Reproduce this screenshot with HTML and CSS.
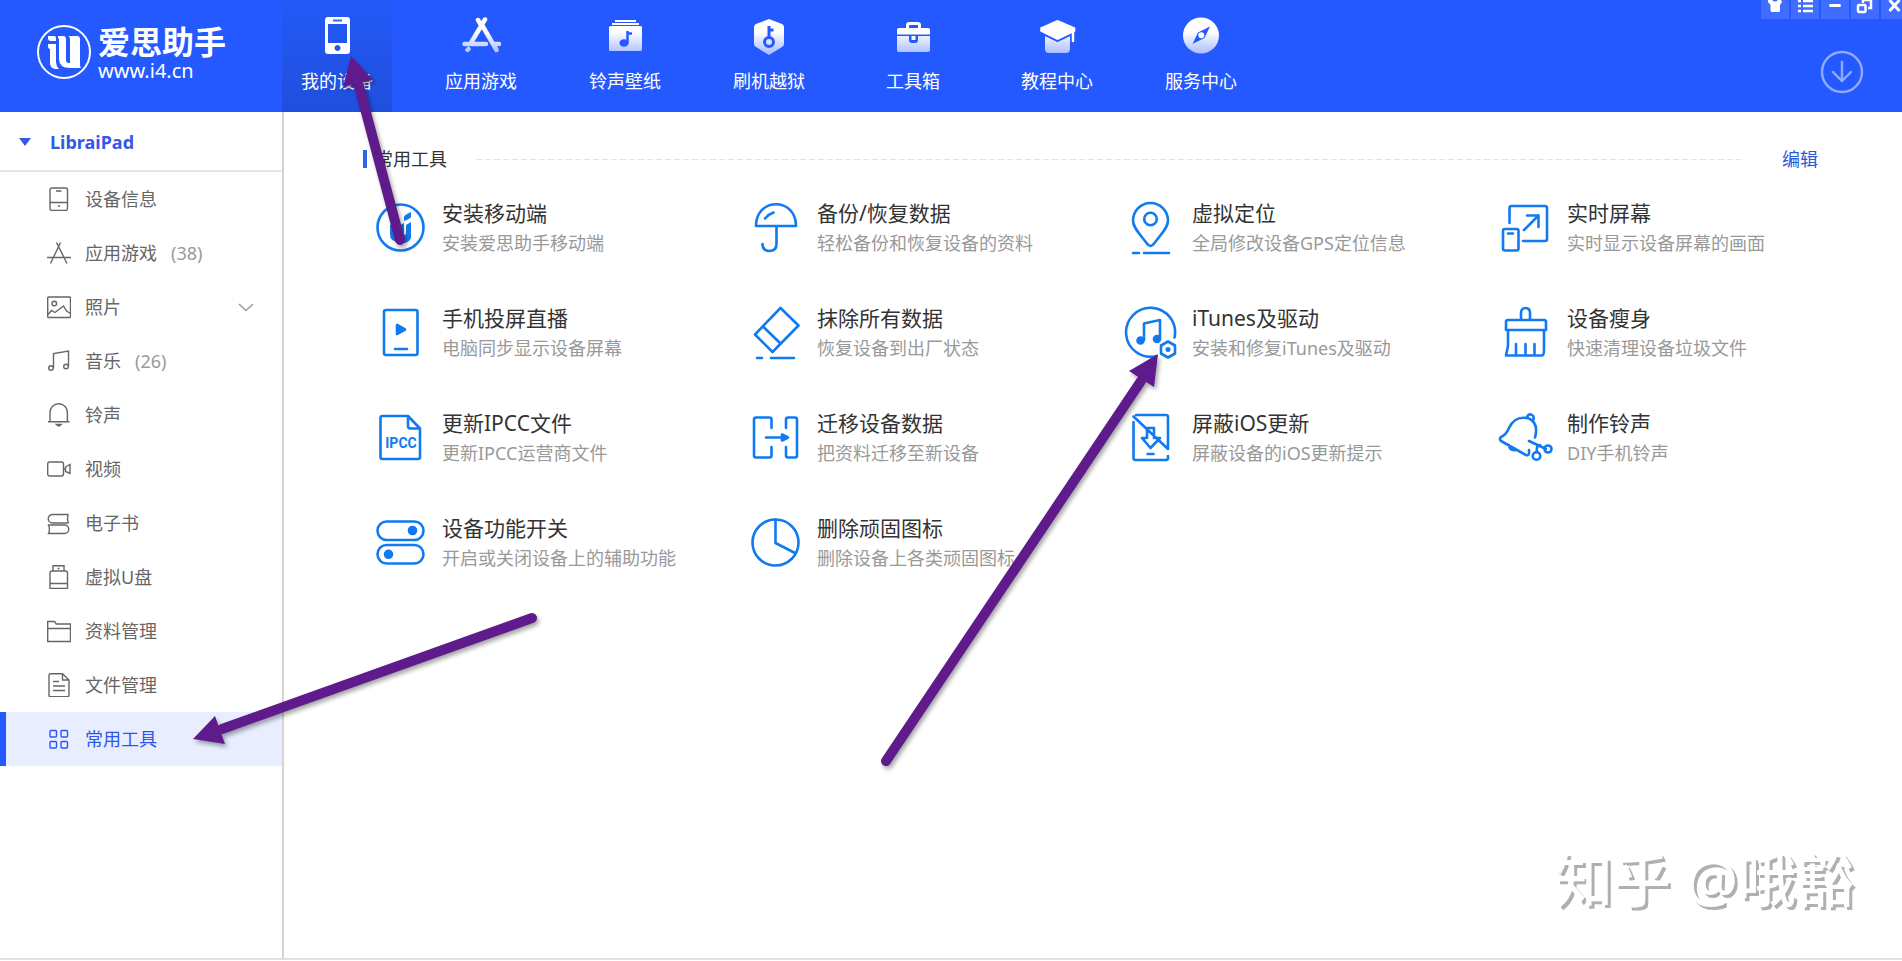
FILE: index.html
```html
<!DOCTYPE html>
<html lang="zh-CN">
<head>
<meta charset="utf-8">
<meta name="viewport" content="width=device-width, initial-scale=1">
<title>爱思助手</title>
<link rel="stylesheet" href="styles.css">
</head>
<body>
<svg class="defs" aria-hidden="true">
  <defs>
    <linearGradient id="fade" gradientUnits="userSpaceOnUse" x1="0" y1="6" x2="0" y2="38">
      <stop offset="0.3" stop-color="#fff"/>
      <stop offset="1" stop-color="#a9bcff"/>
    </linearGradient>
  </defs>
</svg>

<header class="topbar">
  <a class="brand" href="#">
    <svg class="brand-mark" viewBox="0 0 56 56" aria-hidden="true">
      <circle cx="28" cy="28" r="26" fill="none" stroke="#fff" stroke-width="2"/>
      <g fill="#fff">
        <path d="M12 12h6q2 0 2 2v3h-5q-3 0-3-3z"/>
        <path d="M12 20h8v18q0 4 3 7h-4q-5-1-5-6V25q-2 0-2-3z"/>
        <path d="M22 12h5q3 0 3 3v21q0 3 3 3h1V16q0-4-2-4h9q3 0 3 3v26q0 2 1 3H34q-11 0-11-9V16q0-2-1-2z"/>
      </g>
    </svg>
    <span class="brand-text">
      <strong class="brand-name">爱思助手</strong>
      <span class="brand-url">www.i4.cn</span>
    </span>
  </a>
  <nav class="topnav">
    <a class="topnav-item is-active" href="#">
      <svg class="topnav-icon" viewBox="0 0 40 40"><path fill="#fff" fill-rule="evenodd" d="M11 1h19a3 3 0 0 1 3 3v31a3 3 0 0 1-3 3H11a3 3 0 0 1-3-3V4a3 3 0 0 1 3-3zM11 8v19h19V8zM20.500 29a3 3 0 1 0 .01 0z"/><path stroke="#3f66e8" stroke-width="2" d="M16 4.500h9"/></svg>
      <span>我的设备</span>
    </a>
    <a class="topnav-item" href="#">
      <svg class="topnav-icon" viewBox="0 0 40 40"><g fill="none" stroke="url(#fade)" stroke-width="4.500" stroke-linecap="round"><path d="M17 4l3 5M24 3.500L10.500 26M21 9l14.500 25M3.500 28H25M33 28h5M7.500 33l-1 1"/></g></svg>
      <span>应用游戏</span>
    </a>
    <a class="topnav-item" href="#">
      <svg class="topnav-icon" viewBox="0 0 40 40"><path stroke="#fff" stroke-width="2" d="M10 5h21M7 8h27"/><rect x="4" y="10" width="33" height="25" rx="1.500" fill="url(#fade)"/><ellipse cx="19" cy="27" rx="4.500" ry="3.800" fill="#2459ff"/><path fill="none" stroke="#2459ff" stroke-width="2.500" d="M22.500 27V15M22 17.500h5"/></svg>
      <span>铃声壁纸</span>
    </a>
    <a class="topnav-item" href="#">
      <svg class="topnav-icon" viewBox="0 0 40 40"><path fill="url(#fade)" d="M20 3l13 5q2 1 2 3v17q0 2-2 3l-13 8-13-8q-2-1-2-3V11q0-2 2-3z"/><g fill="none" stroke="#2459ff" stroke-width="3"><circle cx="20" cy="26" r="4.500"/><path d="M20 21.500V10M20 14h4.500"/></g></svg>
      <span>刷机越狱</span>
    </a>
    <a class="topnav-item" href="#">
      <svg class="topnav-icon" viewBox="0 0 40 40"><path fill="none" stroke="#fff" stroke-width="3" d="M14.500 13V9q0-1.500 2-1.500h8q2 0 2 1.500v4"/><path fill="#fff" d="M6 12h29q2 0 2 2v4.500H4V14q0-2 2-2z"/><path fill="url(#fade)" d="M4 20h12v4q0 3 3 3h3q3 0 3-3v-4h12v14q0 2-2 2H6q-2 0-2-2z"/><path fill="#fff" d="M18.500 20h4v4h-4z"/></svg>
      <span>工具箱</span>
    </a>
    <a class="topnav-item" href="#">
      <svg class="topnav-icon" viewBox="0 0 40 40"><path fill="url(#fade)" d="M8 20l12.500 6L33 20v13q0 4-4 4H12q-4 0-4-4z"/><path fill="#fff" stroke="#2459ff" stroke-width="1.500" stroke-linejoin="round" d="M20.500 3L39 11v5L20.500 25 2.500 16v-5z"/><path stroke="#fff" stroke-width="2.500" stroke-linecap="round" d="M36 13v12"/></svg>
      <span>教程中心</span>
    </a>
    <a class="topnav-item" href="#">
      <svg class="topnav-icon" viewBox="0 0 40 40"><circle cx="20" cy="19.500" r="18" fill="url(#fade)"/><path fill="#2459ff" d="M29 10.500l-5.500 11.500L11.500 28 17 16.500z"/><circle cx="20.300" cy="19.300" r="3" fill="#fff"/></svg>
      <span>服务中心</span>
    </a>
  </nav>
  <div class="topbar-side">
    <div class="window-controls">
      <button type="button" aria-label="皮肤"><svg viewBox="0 0 28 19"><path fill="#fff" d="M7 0h4q3 3 6 0h3l1 2-2 3v5.500q0 1.500-1.500 1.500h-6.500q-1.500 0-1.500-1.500V5L7 2z"/></svg></button>
      <button type="button" aria-label="菜单"><svg viewBox="0 0 28 19"><path stroke="#fff" stroke-width="2.500" d="M7 1h3M12 1h10M7 6h3M12 6h10M7 11h3M12 11h10"/></svg></button>
      <button type="button" aria-label="最小化"><svg viewBox="0 0 28 19"><path stroke="#fff" stroke-width="3" stroke-linecap="round" d="M9.500 5.500h9"/></svg></button>
      <button type="button" aria-label="还原"><svg viewBox="0 0 28 19"><g fill="none" stroke="#fff" stroke-width="2.500"><rect x="7" y="5" width="7.500" height="7" rx="1"/><path d="M12 3V0h8v8h-3"/></g></svg></button>
      <button type="button" aria-label="关闭"><svg viewBox="0 0 28 19"><path stroke="#fff" stroke-width="3" d="M8.500 0l10 11M18.500 0l-10 11"/></svg></button>
    </div>
    <button class="download" type="button" aria-label="下载">
      <svg viewBox="0 0 44 44"><g fill="none" stroke="#8fabff" stroke-width="2.400" stroke-linecap="round"><circle cx="22" cy="22" r="20"/><path d="M22 12v18M13 22l9 9 9-9"/></g></svg>
    </button>
  </div>
</header>

<div class="body">
  <aside class="sidebar">
    <button class="device" type="button"><span class="device-caret"></span>LibraiPad</button>
    <ul class="menu">
      <li><a class="menu-item" href="#"><svg viewBox="0 0 24 24"><rect x="3" y="1" width="17.500" height="22.500" rx="2"/><path d="M3 15.500h17.500M9 4h5.500M11 19h2"/></svg>设备信息</a></li>
      <li><a class="menu-item" href="#"><svg viewBox="0 0 24 24"><path d="M9.500 1.500l10.500 21M13.500 1.500L3.500 22.500M0 16.500h24"/></svg>应用游戏<span class="count">(38)</span></a></li>
      <li><a class="menu-item" href="#"><svg viewBox="0 0 24 24"><rect x=".7" y="2" width="22.800" height="20.500" rx="1"/><circle cx="7.300" cy="8.500" r="2.300"/><path d="M1 19.500l3.500-4 3.500 2 8.500-6.500 3 5 4 2.500"/></svg>照片<svg class="chevron" viewBox="0 0 16 16"><path d="M1 5l7 6.500L15 5"/></svg></a></li>
      <li><a class="menu-item" href="#"><svg viewBox="0 0 24 24"><path d="M6.500 19V4.500L21.500 2v15"/><circle cx="4" cy="19" r="2.300"/><circle cx="19" cy="17.500" r="2.300"/></svg>音乐<span class="count">(26)</span></a></li>
      <li><a class="menu-item" href="#"><svg viewBox="0 0 24 24"><path d="M3 18.500V9.500a8.700 8.700 0 0 1 17.400 0v9M1 18.700h21.500"/><path d="M9.500 21.500h4.500l-1.500 1.300h-1.500z"/></svg>铃声</a></li>
      <li><a class="menu-item" href="#"><svg viewBox="0 0 24 24"><rect x=".7" y="5" width="15.800" height="14" rx="2"/><path d="M16.500 12h2M18.500 10l4.500-2.500v9L18.500 14.500z"/></svg>视频</a></li>
      <li><a class="menu-item" href="#"><svg viewBox="0 0 24 24"><path d="M21.500 3.500H5.500a4.200 4.200 0 0 0 0 8.500h16M21.500 3.500q-2 4 0 8.500M1.500 14h16a4.200 4.200 0 0 1 0 8.500h-16q2-4 0-8.500z"/></svg>电子书</a></li>
      <li><a class="menu-item" href="#"><svg viewBox="0 0 24 24"><path d="M6 6V.7h11V6M3 8q0-2 2-2h13.500q2 0 2 2v15.500H3zM3 18.500h17.500M10.500 3.500h2"/></svg>虚拟U盘</a></li>
      <li><a class="menu-item" href="#"><svg viewBox="0 0 24 24"><path d="M.7 22.500V2.500h7l1.500 2.500h14.300v17.500zM.7 9.500h22.800"/></svg>资料管理</a></li>
      <li><a class="menu-item" href="#"><svg viewBox="0 0 24 24"><path d="M15.500.7H3.500q-1.500 0-1.500 1.500v20q0 1.500 1.500 1.500h17q1.500 0 1.500-1.500V7zM15.500.7V7H22M6 8.500h6M6 13h12M6 17.500h12"/></svg>文件管理</a></li>
      <li><a class="menu-item is-active" href="#"><svg viewBox="0 0 24 24"><rect x="3" y="3.500" width="6.500" height="6.500" rx="1"/><rect x="14" y="3.500" width="6.500" height="6.500" rx="1"/><rect x="3" y="14.500" width="6.500" height="6.500" rx="1"/><rect x="14" y="14.500" width="6.500" height="6.500" rx="1"/></svg>常用工具</a></li>
    </ul>
  </aside>

  <main class="content">
    <div class="section-head">
      <h1>常用工具</h1>
      <span class="rule"></span>
      <a class="edit" href="#">编辑</a>
    </div>
    <div class="tools">
      <button class="tool" type="button">
        <svg viewBox="0 0 56 56"><circle cx="28.500" cy="27.500" r="23"/><g fill="#117af0" stroke="none"><path d="M18 18l6-4v5l-6 4zM18 25l6-3v13l5 3-3 4q-8-1-8-7zM32 17q0-2 7-5v5q-1 2-7 4zM27 26l5-3v12l2-1V25l5-3v16q-2 5-8 5z"/></g></svg>
        <span class="tool-text"><span class="tool-name">安装移动端</span><span class="tool-desc">安装爱思助手移动端</span></span>
      </button>
      <button class="tool" type="button">
        <svg viewBox="0 0 56 56"><path d="M9 26C9 -3 49 -3 49 26zM29.500 26v18q0 7-7 7t-7-7M18 18.500q3-4 8.500-6"/></svg>
        <span class="tool-text"><span class="tool-name">备份/恢复数据</span><span class="tool-desc">轻松备份和恢复设备的资料</span></span>
      </button>
      <button class="tool" type="button">
        <svg viewBox="0 0 56 56"><path d="M28.500 46q-2 0-4-3C18 34 11 28 11 20.500a17.500 17.500 0 0 1 35 0C46 28 39 34 32.500 43q-2 3-4 3zM11 53h6M22 53h25"/><circle cx="28.500" cy="19" r="6.300"/></svg>
        <span class="tool-text"><span class="tool-name">虚拟定位</span><span class="tool-desc">全局修改设备GPS定位信息</span></span>
      </button>
      <button class="tool" type="button">
        <svg viewBox="0 0 56 56"><path d="M12.500 23V8q0-2 2-2H48q2 0 2 2v31q0 2-2 2H26M27 30l14.500-14.500M30 15.500h11.500V27M11 33.500h5"/><rect x="6" y="29" width="15.500" height="21.500" rx="2"/></svg>
        <span class="tool-text"><span class="tool-name">实时屏幕</span><span class="tool-desc">实时显示设备屏幕的画面</span></span>
      </button>
      <button class="tool" type="button">
        <svg viewBox="0 0 56 56"><rect x="12" y="5" width="33.500" height="45" rx="2"/><path class="solid" d="M25 20l8 4.500-8 4.500z"/><path d="M23 44h12"/></svg>
        <span class="tool-text"><span class="tool-name">手机投屏直播</span><span class="tool-desc">电脑同步显示设备屏幕</span></span>
      </button>
      <button class="tool" type="button">
        <svg viewBox="0 0 56 56"><path d="M33.500 3l18 17.500L25.500 47 8 29.500zM16 21.500l17.500 17M10 53h5M24 53h23"/></svg>
        <span class="tool-text"><span class="tool-name">抹除所有数据</span><span class="tool-desc">恢复设备到出厂状态</span></span>
      </button>
      <button class="tool" type="button">
        <svg viewBox="0 0 56 56"><path d="M34 51.200A24.500 24.500 0 1 1 52.500 32.500M22 35V18.500l16-3.500v18"/><circle class="solid" cx="18.500" cy="35.500" r="3"/><circle class="solid" cx="35" cy="34" r="3"/><path d="M46 36.500l7 4v8l-7 4-7-4v-8z"/><circle class="solid" cx="46" cy="44.500" r="1.200"/></svg>
        <span class="tool-text"><span class="tool-name">iTunes及驱动</span><span class="tool-desc">安装和修复iTunes及驱动</span></span>
      </button>
      <button class="tool" type="button">
        <svg viewBox="0 0 56 56"><path d="M24 15V8q0-5 4.500-5T33 8v7M9 25V17q0-2 2-2h36q2 0 2 2v8zM11 25v16l-2 9.500h36q2 0 2-6V25M19 50V39M28.500 50V39M37.500 50V39"/></svg>
        <span class="tool-text"><span class="tool-name">设备瘦身</span><span class="tool-desc">快速清理设备垃圾文件</span></span>
      </button>
      <button class="tool" type="button">
        <svg viewBox="0 0 56 56"><path d="M36 6H10.500q-2 0-2 2v39q0 2 2 2H46q2 0 2-2V18.500zM36 6v10q0 2.500 2.500 2.500H48"/><text class="icon-text" x="29" y="38" text-anchor="middle">IPCC</text></svg>
        <span class="tool-text"><span class="tool-name">更新IPCC文件</span><span class="tool-desc">更新IPCC运营商文件</span></span>
      </button>
      <button class="tool" type="button">
        <svg viewBox="0 0 56 56"><path d="M24.500 18V9.500q0-2-2-2H9q-2 0-2 2v36q0 2 2 2h13.500q2 0 2-2V37M39 18V9.500q0-2 2-2h7q2 0 2 2v36q0 2-2 2h-7q-2 0-2-2V37M19 27.500h16"/><path class="solid" d="M35 24.500l6 3-6 3z"/></svg>
        <span class="tool-text"><span class="tool-name">迁移设备数据</span><span class="tool-desc">把资料迁移至新设备</span></span>
      </button>
      <button class="tool" type="button">
        <svg viewBox="0 0 56 56"><path d="M14 5h30q2 0 2 2v32L11.500 6.500M11.500 12v36q0 2 2 2H44q2 0 2-2v-2M25 18h7v10h6l-9.500 10L20 28h5zM25.500 44h6"/></svg>
        <span class="tool-text"><span class="tool-name">屏蔽iOS更新</span><span class="tool-desc">屏蔽设备的iOS更新提示</span></span>
      </button>
      <button class="tool" type="button">
        <svg viewBox="0 0 56 56"><path d="M38 27.500q4-14-6-19Q18 5 12 18q-3 7-8 9-2 2 0 4l25 14q3 1 3-2v-3M30 7q2-4 5-2t1 5M12 35q0 6 7 5M32 31l17 8M43 35q-4 0-3 7"/><circle cx="39.500" cy="46" r="3.800"/><circle cx="51" cy="39" r="3.500"/></svg>
        <span class="tool-text"><span class="tool-name">制作铃声</span><span class="tool-desc">DIY手机铃声</span></span>
      </button>
      <button class="tool" type="button">
        <svg viewBox="0 0 56 56"><rect x="5.500" y="6.500" width="46" height="18.500" rx="9.200"/><rect x="5.500" y="30" width="46" height="18.500" rx="9.200"/><circle class="solid" cx="40.500" cy="15.500" r="3.500"/><circle class="solid" cx="16.500" cy="39.300" r="3.500"/></svg>
        <span class="tool-text"><span class="tool-name">设备功能开关</span><span class="tool-desc">开启或关闭设备上的辅助功能</span></span>
      </button>
      <button class="tool" type="button">
        <svg viewBox="0 0 56 56"><circle cx="28.500" cy="27.500" r="23"/><path d="M28.500 4.500V28L48 38"/></svg>
        <span class="tool-text"><span class="tool-name">删除顽固图标</span><span class="tool-desc">删除设备上各类顽固图标</span></span>
      </button>
    </div>
    <p class="watermark">知乎 @哦豁</p>
  </main>
</div>

<svg class="arrows" viewBox="0 0 1902 961" aria-hidden="true">
  <g stroke="#5f1b8c" stroke-width="10" stroke-linecap="round" fill="#5f1b8c">
    <path d="M400 240L359 86"/>
    <path stroke="none" d="M351 56l22 24-30 7z"/>
    <path d="M532 618L222 729"/>
    <path stroke="none" d="M193 739l22-23 10 28z"/>
    <path d="M886 761l255-380"/>
    <path stroke="none" d="M1158 354l-4 33-25-16z"/>
  </g>
</svg>
</body>
</html>
```

FILE: styles.css
```css
* {
  box-sizing: border-box;
}

body {
  margin: 0;
  min-height: 100vh;
  display: flex;
  flex-direction: column;
  position: relative;
  background: #fff;
  color: #333;
  font-family: "Noto Sans", "Noto Sans CJK SC", sans-serif;
  font-size: 18px;
  line-height: 24px;
}

a {
  color: inherit;
  text-decoration: none;
}

button {
  border: 0;
  padding: 0;
  background: none;
  color: inherit;
  font: inherit;
  text-align: left;
  cursor: pointer;
}

svg {
  display: block;
  flex: none;
}

.defs {
  position: absolute;
  width: 0;
  height: 0;
}

/* Top bar */
.topbar {
  display: flex;
  height: 112px;
  overflow: hidden;
  background: #2459ff;
  color: #fff;
}

.brand {
  display: flex;
  gap: 6px;
  width: 282px;
  padding: 24px 0 0 36px;
}

.brand-mark {
  width: 56px;
  height: 56px;
}

.brand-text {
  display: flex;
  flex-direction: column;
}

.brand-name {
  font-size: 32px;
  font-weight: 700;
  line-height: 36px;
}

.brand-url {
  font-size: 20px;
  line-height: 22px;
}

.topnav {
  display: flex;
  gap: 34px;
}

.topnav-item {
  display: flex;
  flex-direction: column;
  align-items: center;
  gap: 13px;
  width: 110px;
  padding-top: 16px;
}

.topnav-item.is-active {
  background: linear-gradient(#2459f8, #1f4fdc);
}

.topnav-icon {
  width: 40px;
  height: 40px;
}

.topbar-side {
  display: flex;
  flex-direction: column;
  gap: 31px;
  margin: 0 -7px 0 auto;
}

.window-controls {
  display: flex;
  gap: 2px;
}

.window-controls button {
  width: 28px;
  height: 19px;
  background: #3e6dff;
}

.download {
  align-self: flex-end;
  width: 44px;
  height: 44px;
  margin-right: 45px;
}

/* Page body */
.body {
  display: flex;
  flex: 1;
  margin-bottom: 1px;
  border-bottom: 2px solid #e0e0e0;
}

.sidebar {
  width: 284px;
  border-right: 2px solid #d4d4d6;
}

.device {
  display: flex;
  align-items: center;
  gap: 19px;
  width: 100%;
  height: 60px;
  padding: 2px 0 0 19px;
  border-bottom: 2px solid #e6e6e6;
  color: #3558e6;
  font-weight: 700;
}

.device-caret {
  border: solid transparent;
  border-width: 8px 6px 0;
  border-top-color: #3558e6;
}

.menu {
  margin: 0;
  padding: 0;
  list-style: none;
}

.menu-item {
  display: flex;
  align-items: center;
  gap: 14px;
  height: 54px;
  padding: 0 28px 0 41px;
  border-left: 6px solid transparent;
  color: #666;
}

.menu-item svg {
  width: 24px;
  height: 24px;
  fill: none;
  stroke: currentColor;
  stroke-width: 1.4;
}

.menu-item.is-active {
  border-color: #2459ff;
  background: #e8edff;
  color: #2c55f0;
}

.menu-item .chevron {
  width: 16px;
  height: 16px;
  margin-left: auto;
  color: #999;
}

.count {
  color: #999;
}

.content {
  display: flex;
  flex-direction: column;
  flex: 1;
  padding: 35px 30px 46px 79px;
}

.section-head {
  display: flex;
  align-items: center;
  padding-right: 54px;
}

.section-head h1 {
  display: flex;
  align-items: center;
  gap: 8px;
  margin: 0;
  font-size: 18px;
  font-weight: 400;
  color: #333;
}

.section-head h1::before {
  content: "";
  width: 4px;
  height: 18px;
  background: #2f66e8;
}

.rule {
  flex: 1;
  height: 1px;
  margin: 0 41px 0 29px;
  background: repeating-linear-gradient(90deg, #e4e4e4 0 6px, transparent 6px 9px);
}

.edit {
  color: #2c55d8;
}

.tools {
  display: grid;
  grid-template-columns: repeat(4, 1fr);
  row-gap: 45px;
  padding: 29px 0 0 9px;
}

.tool {
  display: flex;
  gap: 14px;
}

.tool svg {
  width: 56px;
  height: 56px;
  fill: none;
  stroke: #117af0;
  stroke-width: 2.6;
  stroke-linecap: round;
  stroke-linejoin: round;
}

.tool .solid {
  fill: #117af0;
}

.tool .icon-text {
  fill: #117af0;
  stroke: none;
  font: bold 14px Roboto, "Liberation Sans", sans-serif;
}

.tool-text {
  display: flex;
  flex-direction: column;
}

.tool-name {
  color: #333;
  font-size: 21px;
  line-height: 26px;
}

.tool-desc {
  color: #999;
  line-height: 34px;
}

.watermark {
  margin: auto 18px 0 0;
  align-self: flex-end;
  color: #fff;
  font-size: 58px;
  font-weight: 500;
  line-height: 64px;
  text-shadow: 3px 3px 0 #b0b0b0;
}

/* Pointer arrows drawn over the window */
.arrows {
  position: absolute;
  top: 0;
  left: 0;
  width: 1902px;
  height: 961px;
  pointer-events: none;
  filter: drop-shadow(2px 3px 2px rgba(0, 0, 0, 0.35));
}
```
